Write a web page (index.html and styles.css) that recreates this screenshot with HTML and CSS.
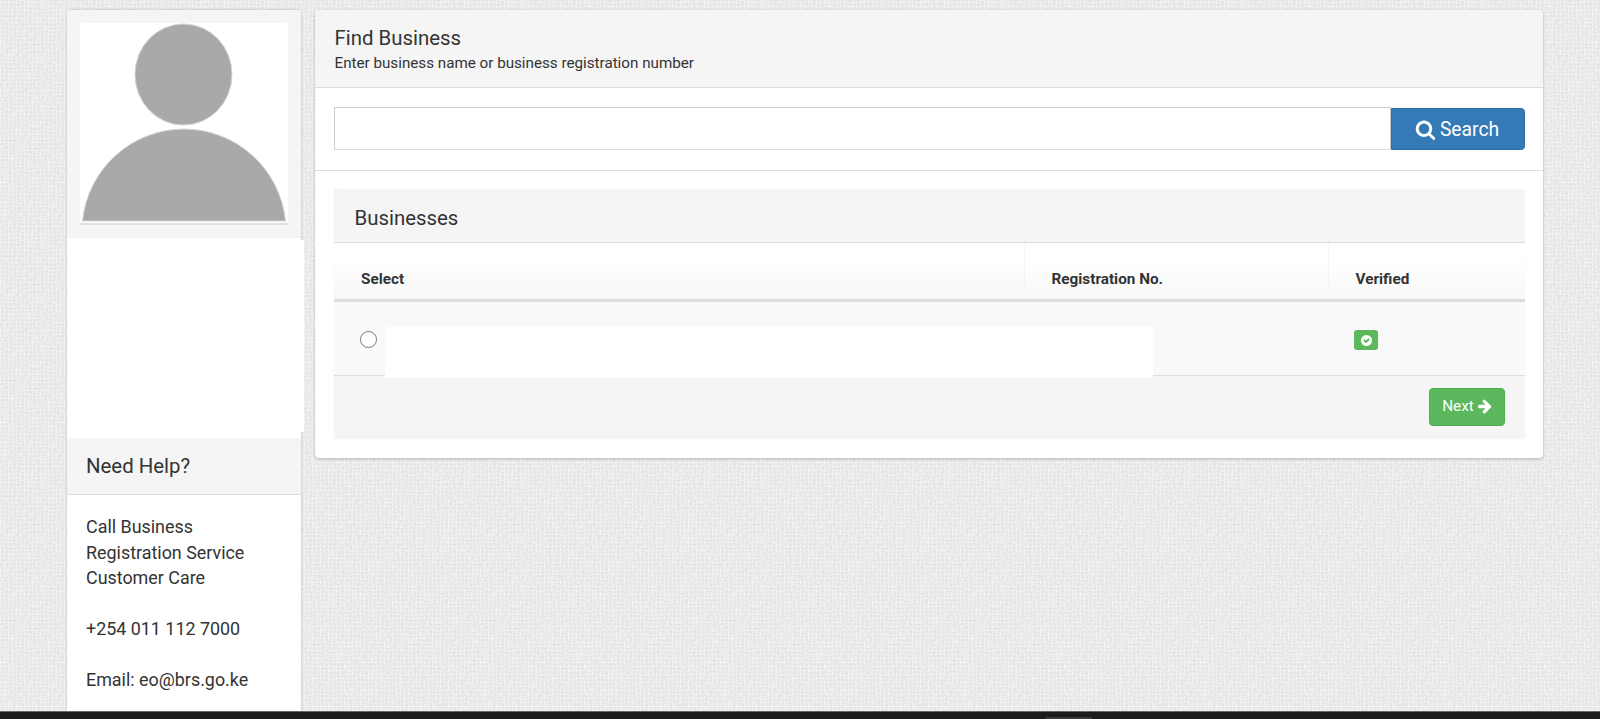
FILE: index.html
```html
<!DOCTYPE html>
<html lang="en">
<head>
    <meta charset="UTF-8">
    <meta name="viewport" content="width=device-width, initial-scale=1.0">
    <title>Find Business</title>
    <link rel="stylesheet" href="styles.css">
</head>
<body>

<div class="page">
    <!-- Left column -->
    <div class="sidebar">
        <div class="profile-box">
            <svg class="avatar" viewBox="0 0 208 202" width="208" height="202">
                <rect width="208" height="202" fill="#fff"/>
                <ellipse cx="103.5" cy="51.5" rx="48.5" ry="50.5" fill="#a9a9a9" stroke="#d4d4d4"/>
                <path d="M2.5 198 A102 102 0 0 1 205.5 198 Z" fill="#a9a9a9" stroke="#d4d4d4"/>
                <rect y="200" width="208" height="2" fill="#dfdfdf"/>
            </svg>
        </div>
        <div class="profile-blank"></div>
        <div class="help-title">Need Help?</div>
        <div class="help-body">
            <p>Call Business<br>Registration Service<br>Customer Care</p>
            <p>+254 011 112 7000</p>
            <p>Email: eo@brs.go.ke</p>
        </div>
    </div>

    <!-- Main panel -->
    <div class="main-panel">
        <div class="main-head">
            <h1>Find Business</h1>
            <small>Enter business name or business registration number</small>
        </div>
        <div class="search-row">
            <input type="text" class="search-input">
            <button class="search-btn">
                <svg class="icon" viewBox="0 0 1792 1792" width="21" height="21"><path fill="#fff" d="M1216 832q0-185-131.5-316.5t-316.5-131.5-316.5 131.5-131.5 316.5 131.5 316.5 316.5 131.5 316.5-131.5 131.5-316.5zm512 832q0 52-38 90t-90 38q-54 0-90-38l-343-342q-179 124-399 124-143 0-273.5-55.5t-225-150-150-225-55.5-273.5 55.5-273.5 150-225 225-150 273.5-55.5 273.5 55.5 225 150 150 225 55.5 273.5q0 220-124 399l343 343q37 37 37 90z"/></svg>
                Search
            </button>
        </div>
        <div class="results">
            <div class="results-box">
                <div class="results-head">Businesses</div>
                <table class="results-table">
                    <thead>
                        <tr>
                            <th class="col-select">Select</th>
                            <th class="col-reg">Registration No.</th>
                            <th>Verified</th>
                        </tr>
                    </thead>
                    <tbody>
                        <tr>
                            <td><span class="radio"></span><span class="row-blank"></span></td>
                            <td></td>
                            <td>
                                <span class="badge">
                                    <svg viewBox="0 0 1792 1792" width="13" height="13"><path fill="#fff" d="M1664 896q0 209-103 385.5t-279.5 279.5-385.5 103-385.5-103-279.5-279.5-103-385.5 103-385.5 279.5-279.5 385.5-103 385.5 103 279.5 279.5 103 385.5zm-365-83q19-19 19-45t-19-45l-102-102q-19-19-45-19t-45 19l-275 275-147-147q-19-19-45-19t-45 19l-102 102q-19 19-19 45t19 45l294 294q19 19 45 19t45-19z"/></svg>
                                </span>
                            </td>
                        </tr>
                    </tbody>
                </table>
                <div class="results-foot">
                    <button class="next-btn">
                        Next
                        <svg viewBox="0 0 1792 1792" width="16" height="16"><path fill="#fff" d="M1600 960q0 54-37 91l-651 651q-39 37-91 37-51 0-90-37l-75-75q-38-38-38-91t38-91l293-293h-704q-52 0-84.5-37.5t-32.5-90.5v-128q0-53 32.5-90.5t84.5-37.5h704l-293-294q-38-36-38-90t38-90l75-75q38-38 90-38 53 0 91 38l651 651q37 35 37 90z"/></svg>
                    </button>
                </div>
            </div>
        </div>
    </div>
</div>

<div class="bottom-bar"><span class="bar-tab"></span></div>

</body>
</html>
```

FILE: styles.css
```css
/* Basic reset */
* {
    margin: 0;
    padding: 0;
    box-sizing: border-box;
}

html, body {
    height: 100%;
    overflow: hidden;
}

body {
    font-family: Roboto, 'Liberation Sans', sans-serif;
    color: #333;
    display: flex;
    flex-direction: column;
    background-color: #ededed;
    /* Woven linen look: noise on top of a fine grid */
    background-image:
        url("data:image/svg+xml,%3Csvg xmlns='http://www.w3.org/2000/svg' width='240' height='240'%3E%3Cfilter id='n'%3E%3CfeTurbulence type='fractalNoise' baseFrequency='0.45' numOctaves='2' stitchTiles='stitch'/%3E%3CfeColorMatrix values='0 0 0 0 0.5 0 0 0 0 0.5 0 0 0 0 0.5 0 0 0 0.5 -0.15'/%3E%3C/filter%3E%3Crect width='240' height='240' filter='url(%23n)'/%3E%3C/svg%3E"),
        repeating-linear-gradient(0deg, rgba(255,255,255,0.4) 0, rgba(255,255,255,0.4) 1px, transparent 1px, transparent 4px),
        repeating-linear-gradient(90deg, rgba(255,255,255,0.4) 0, rgba(255,255,255,0.4) 1px, transparent 1px, transparent 4px);
}

.page {
    flex: 1;
    min-height: 0;
    display: flex;
    align-items: flex-start;
    gap: 14px;
    padding: 10px 57px 0 67px;
}

/* Left column */
.sidebar {
    width: 234px;
    height: 701px;
    flex-shrink: 0;
    background-color: #fff;
    border-radius: 4px 4px 0 0;
    box-shadow: 0 0 3px rgba(0,0,0,0.2);
}

.profile-box {
    height: 228px;
    padding: 13px 13px 0;
    background-color: #f5f5f5;
    border-radius: 4px 4px 0 0;
}

.avatar {
    display: block;
    border-radius: 4px 4px 0 0;
}

.profile-blank {
    height: 200px;
    background-color: #fff;
    position: relative;
}

/* The blanked area sticks out a little past the column */
.profile-blank::after {
    content: '';
    position: absolute;
    top: 2px;
    bottom: 6px;
    right: -3px;
    width: 3px;
    background-color: #fff;
}

.help-title {
    height: 57px;
    padding: 0 19px;
    display: flex;
    align-items: center;
    font-size: 20.4px;
    background-color: #f5f5f5;
    border-bottom: 1px solid #ddd;
}

.help-body {
    padding: 19px 19px 0;
    font-size: 17.9px;
    line-height: 25.5px;
}

.help-body p {
    margin-bottom: 25.5px;
}

/* Main panel */
.main-panel {
    width: 1228px;
    height: 448px;
    background-color: #fff;
    border-radius: 4px;
    box-shadow: 0 1px 3px rgba(0,0,0,0.25);
}

.main-head {
    height: 78px;
    padding: 16px 19.5px 0;
    background-color: #f5f5f5;
    border-bottom: 1px solid #ddd;
    border-radius: 4px 4px 0 0;
}

.main-head h1 {
    font-size: 20.4px;
    font-weight: 400;
    line-height: 24px;
}

.main-head small {
    display: block;
    margin-top: 2px;
    font-size: 15.2px;
    line-height: 22px;
}

.search-row {
    height: 83px;
    padding: 19px 18px 0 19px;
    display: flex;
    align-items: flex-start;
    border-bottom: 1px solid #ddd;
}

.search-input {
    flex: 1;
    height: 43px;
    border: 1px solid #ccc;
    border-bottom-color: #ddd;
    background-color: #fff;
}

.search-btn {
    width: 134px;
    height: 42px;
    margin-top: 1px;
    padding-right: 2px;
    display: flex;
    align-items: center;
    justify-content: center;
    gap: 4px;
    font-family: inherit;
    font-size: 19.3px;
    color: #fff;
    background-color: #337ab7;
    border: 1px solid #2e6da4;
    border-radius: 0 4px 4px 0;
}

.results {
    padding: 18px 18px 0 19px;
}

.results-box {
    background-color: #f5f5f5;
    border-radius: 4px;
    overflow: hidden;
    box-shadow: 0 0 1px rgba(0,0,0,0.15);
}

.results-head {
    height: 54px;
    padding: 5px 20.5px 0;
    display: flex;
    align-items: center;
    font-size: 20.4px;
    border-bottom: 1px solid #ddd;
}

.results-table {
    width: 100%;
    border-collapse: collapse;
    table-layout: fixed;
}

.results-table th {
    height: 57px;
    padding: 16px 27px 0;
    text-align: left;
    font-size: 15.3px;
    font-weight: 700;
    background: linear-gradient(#fff 30%, #f7f7f7);
    border-bottom: 3px solid #ddd;
    border-right: 1px solid #f5f5f5;
}

.results-table th:last-child {
    border-right: none;
}

.col-select {
    width: 690px;
}

.col-reg {
    width: 304px;
}

.results-table td {
    height: 75px;
    padding: 0 27px;
    background-color: #f9f9f9;
    border-bottom: 1px solid #ddd;
    position: relative;
}

.radio {
    display: block;
    width: 17px;
    height: 17px;
    margin: 3px 0 0 -1px;
    background-color: #fff;
    border: 1px solid #767676;
    border-radius: 50%;
}

/* Blanked out business name */
.row-blank {
    position: absolute;
    left: 51px;
    top: 25px;
    width: 768px;
    height: 51px;
    background-color: #fff;
    z-index: 1;
}

.badge {
    width: 24px;
    height: 20px;
    margin: 4px 0 0 -1px;
    display: flex;
    align-items: center;
    justify-content: center;
    background-color: #5cb85c;
    border-radius: 3px;
}

.results-foot {
    height: 63px;
    padding: 12px 20px 0;
    display: flex;
    justify-content: flex-end;
    align-items: flex-start;
}

.next-btn {
    width: 76px;
    height: 38px;
    padding: 0 0 2px 1px;
    display: flex;
    align-items: center;
    justify-content: center;
    gap: 3px;
    font-family: inherit;
    font-size: 15.3px;
    color: #fff;
    background-color: #5cb85c;
    border: 1px solid #4cae4c;
    border-radius: 4px;
}

/* Dark strip along the bottom */
.bottom-bar {
    height: 8px;
    flex-shrink: 0;
    position: relative;
    background-color: #1c1c1c;
    border-top: 1px solid #666;
}

.bar-tab {
    position: absolute;
    left: 1045px;
    bottom: 0;
    width: 47px;
    height: 2px;
    background-color: #3a3a3a;
    border-radius: 3px 3px 0 0;
}
```
